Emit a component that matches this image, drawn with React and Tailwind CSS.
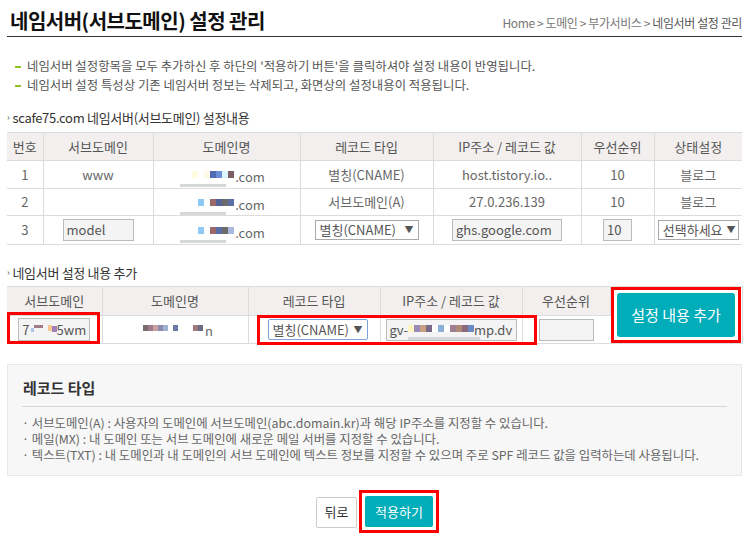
import { useState } from 'react';

const font = { fontFamily: '"Noto Sans CJK KR", "Noto Sans", sans-serif' };

const Censor = ({ colors, bar = true }) => (
    <span className="relative inline-flex items-center">
        <span className="inline-flex gap-0 mr-[1px]">
            {colors.map((c, i) => (
                <span key={i} className="inline-block w-[6px] h-[7px]" style={{ backgroundColor: c }} />
            ))}
        </span>
        {bar && <span className="absolute left-[-12px] top-[13px] w-[46px] h-[3px] bg-[#d4d8d8]" />}
    </span>
);

const DomainCell = ({ colors }) => (
    <div className="flex items-center justify-center pl-[4px]">
        <Censor colors={colors} />
        <span className="mt-[5px]">.com</span>
    </div>
);

const Select = ({ label, className = '' }) => (
    <div className={`inline-flex items-center justify-between border border-[#a9a9a9] bg-white h-[20px] px-[4px] text-[13px] text-[#555] whitespace-nowrap ${className}`}>
        <span>{label}</span>
        <span className="text-[9px] text-[#555] ml-[4px]">▼</span>
    </div>
);

const Dash = () => <span className="inline-block w-[6px] h-[2px] bg-[#8dc21f] mr-[6px] shrink-0" />;

export default function App() {
    const [sub, setSub] = useState('');

    const th = 'h-[28px] bg-[#f2efee] text-[13px] font-normal text-[#555] border-r border-[#dcdcdc] last:border-r-0';
    const td = 'text-[13px] text-[#666] text-center border-r border-[#dcdcdc] last:border-r-0';

    return (
        <div className="w-[749px] h-[536px] bg-white overflow-hidden" style={font}>
            <div className="px-[7px]">
                <div className="flex items-end justify-between h-[37px] border-b border-[#333] pb-[5px]">
                    <h1 className="text-[20px] font-bold text-[#111] leading-none pl-[3px] tracking-[-0.5px]">네임서버(서브도메인) 설정 관리</h1>
                    <div className="text-[12px] text-[#777] leading-none mb-[2px] tracking-[-0.4px]">
                        Home &gt; 도메인 &gt; 부가서비스 &gt; <span className="text-[#555]">네임서버 설정 관리</span>
                    </div>
                </div>

                <ul className="mt-[20px] text-[12.4px] text-[#555] leading-[19px]">
                    <li className="flex items-center pl-[8px]">
                        <Dash />
                        네임서버 설정항목을 모두 추가하신 후 하단의 '적용하기 버튼'을 클릭하셔야 설정 내용이 반영됩니다.
                    </li>
                    <li className="flex items-center pl-[8px]">
                        <Dash />
                        네임서버 설정 특성상 기존 네임서버 정보는 삭제되고, 화면상의 설정내용이 적용됩니다.
                    </li>
                </ul>

                <div className="mt-[16px] text-[13px] text-[#333] flex items-center leading-none tracking-[-0.3px]">
                    <span className="text-[9px] text-[#555] mr-[3px]">›</span>
                    scafe75.com 네임서버(서브도메인) 설정내용
                </div>

                <table className="mt-[8px] w-[735px] border-collapse table-fixed border-t border-[#dcdcdc]">
                    <colgroup>
                        <col className="w-[36px]" />
                        <col className="w-[110px]" />
                        <col className="w-[147px]" />
                        <col className="w-[133px]" />
                        <col className="w-[148px]" />
                        <col className="w-[73px]" />
                        <col className="w-[88px]" />
                    </colgroup>
                    <thead>
                        <tr className="border-b border-[#dcdcdc]">
                            <th className={th}>번호</th>
                            <th className={th}>서브도메인</th>
                            <th className={th}>도메인명</th>
                            <th className={th}>레코드 타입</th>
                            <th className={th}>IP주소 / 레코드 값</th>
                            <th className={th}>우선순위</th>
                            <th className={th}>상태설정</th>
                        </tr>
                    </thead>
                    <tbody>
                        <tr className="h-[28px] border-b border-[#dcdcdc]">
                            <td className={td}>1</td>
                            <td className={td}>www</td>
                            <td className={td}><DomainCell colors={['#fffbe0', '#fff', '#fdfbe8', '#4f6bb2', '#6a8fd8', '#d9f5ff', '#7a6060']} /></td>
                            <td className={td}>별칭(CNAME)</td>
                            <td className={td}>host.tistory.io..</td>
                            <td className={td}>10</td>
                            <td className={td}>블로그</td>
                        </tr>
                        <tr className="h-[27px] border-b border-[#dcdcdc]">
                            <td className={td}>2</td>
                            <td className={td}></td>
                            <td className={td}><DomainCell colors={['#fff', '#8ec8f5', '#fff', '#9a6a6a', '#56639a', '#6b6b6b', '#5b6ea6']} /></td>
                            <td className={td}>서브도메인(A)</td>
                            <td className={td}>27.0.236.139</td>
                            <td className={td}>10</td>
                            <td className={td}>블로그</td>
                        </tr>
                        <tr className="h-[29px] border-b border-[#dcdcdc]">
                            <td className={td}>3</td>
                            <td className={td}>
                                <div className="flex justify-center">
                                    <div className="w-[71px] h-[22px] border border-[#bbb] bg-[#f4f4f4] text-left px-[3px] text-[13px] text-[#555] leading-[20px]">model</div>
                                </div>
                            </td>
                            <td className={td}><DomainCell colors={['#fff', '#8ec8f5', '#fff', '#9a6a6a', '#5b6ea6', '#6b6b6b', '#a8b8e0']} /></td>
                            <td className={td}>
                                <div className="flex justify-center"><Select label="별칭(CNAME)" className="w-[104px]" /></div>
                            </td>
                            <td className={td}>
                                <div className="flex justify-center">
                                    <div className="w-[110px] h-[22px] border border-[#bbb] bg-[#f4f4f4] text-left px-[3px] text-[13px] text-[#555] leading-[20px]">ghs.google.com</div>
                                </div>
                            </td>
                            <td className={td}>
                                <div className="flex justify-center">
                                    <div className="w-[29px] h-[22px] border border-[#bbb] bg-[#f4f4f4] text-left px-[3px] text-[13px] text-[#555] leading-[20px]">10</div>
                                </div>
                            </td>
                            <td className={td}>
                                <div className="flex justify-center"><Select label="선택하세요" className="w-[81px] text-[12.5px] px-[3px]" /></div>
                            </td>
                        </tr>
                    </tbody>
                </table>

                <div className="mt-[21px] text-[13px] text-[#333] flex items-center leading-none tracking-[-0.3px]">
                    <span className="text-[9px] text-[#555] mr-[3px]">›</span>
                    네임서버 설정 내용 추가
                </div>

                <table className="mt-[7px] w-[735px] border-collapse table-fixed border-t border-[#dcdcdc] border-r">
                    <colgroup>
                        <col className="w-[95px]" />
                        <col className="w-[146px]" />
                        <col className="w-[132px]" />
                        <col className="w-[142px]" />
                        <col className="w-[88px]" />
                        <col className="w-[132px]" />
                    </colgroup>
                    <tbody>
                        <tr className="border-b border-[#dcdcdc]">
                            <th className={`${th} h-[29px]`}>서브도메인</th>
                            <th className={th}>도메인명</th>
                            <th className={th}>레코드 타입</th>
                            <th className={th}>IP주소 / 레코드 값</th>
                            <th className={th}>우선순위</th>
                            <td rowSpan={2} className="bg-white p-0 align-middle">
                                <div className="flex justify-center">
                                    <div className="border-[3px] border-[#f00] p-[3px]">
                                        <button className="w-[118px] h-[44px] rounded-[3px] bg-[#00adb9] text-white text-[15px]">설정 내용 추가</button>
                                    </div>
                                </div>
                            </td>
                        </tr>
                        <tr className="h-[28px] border-b border-[#dcdcdc]">
                            <td className={`${td} relative`}>
                                <div className="flex justify-center">
                                    <div className="relative w-[72px] h-[23px] border border-[#bbb] bg-[#f4f4f4] text-left px-[3px] text-[13px] text-[#555] leading-[21px] flex items-center">
                                        <span>7</span>
                                        <span className="inline-block w-[4px] h-[4px] bg-[#b0c4e8] ml-[2px]" />
                                        <span className="inline-block w-[12px] h-[3px] bg-[#a07a8a] mb-[6px]" />
                                        <span className="inline-block w-[8px]" />
                                        <span className="inline-block w-[6px] h-[6px] bg-[#f5c68e] mb-[3px]" />
                                        <span className="inline-block w-[6px] h-[6px] bg-[#9f7fb8] mb-[1px]" />
                                        <span>5wm</span>
                                        <span className="absolute left-[10px] top-[22px] w-[34px] h-[3px] bg-[#d4d8d8]" />
                                    </div>
                                </div>
                                <div className="absolute left-0 top-[-4px] w-[93px] h-[32px] border-[3px] border-[#f00] pointer-events-none" />
                            </td>
                            <td className={td}>
                                <div className="flex items-center justify-center pl-[6px]">
                                    <span className="inline-flex mb-[4px]">
                                        {['#7a6a6a', '#a07a8a', '#c9a0a0', '#8a8ab0', '#9fb0d0', '#fff', '#6b7aa6', '#fff', '#fff', '#fff', '#a07a7a', '#6b6b8a'].map((c, i) => (
                                            <span key={i} className="inline-block w-[5px] h-[6px]" style={{ backgroundColor: c }} />
                                        ))}
                                    </span>
                                    <span className="ml-[2px] mt-[2px]">n</span>
                                </div>
                            </td>
                            <td className={`${td} relative`}>
                                <div className="flex justify-center">
                                    <div className="inline-flex items-center justify-between border border-[#7ea3d6] bg-white h-[21px] w-[100px] px-[4px] text-[13px] text-[#555] rounded-[2px] ml-[7px]">
                                        <span>별칭(CNAME)</span>
                                        <span className="text-[9px]">▼</span>
                                    </div>
                                </div>
                                <div className="absolute left-[8px] top-[-1px] w-[280px] h-[30px] border-[3px] border-[#f00] pointer-events-none" />
                            </td>
                            <td className={td}>
                                <div className="flex justify-center">
                                    <div className="relative w-[131px] h-[22px] border border-[#bbb] bg-[#f4f4f4] text-left px-[3px] text-[13px] text-[#555] leading-[20px] overflow-hidden whitespace-nowrap flex items-center">
                                        <span>gv-</span>
                                        {['#fff3c0', '#9a8ab8', '#c8a080', '#7a6a8a', '#fff', '#8ab0d8', '#fff', '#a08090', '#b08878', '#8a6a7a', '#6a8ac8'].map((c, i) => (
                                            <span key={i} className="inline-block w-[6px] h-[7px] mb-[3px]" style={{ backgroundColor: c }} />
                                        ))}
                                        <span>mp.dv</span>
                                        <span className="absolute left-[21px] top-[17px] w-[72px] h-[4px] bg-[#d4d8d8]" />
                                    </div>
                                </div>
                            </td>
                            <td className={td}>
                                <div className="flex justify-center">
                                    <div className="w-[55px] h-[22px] border border-[#bbb] bg-[#f4f4f4]" />
                                </div>
                            </td>
                        </tr>
                    </tbody>
                </table>

                <div className="mt-[20px] w-[735px] h-[112px] bg-[#f7f7f7] border border-[#e6e6e6] px-[14px]">
                    <div className="pt-[13px] pb-[8px] border-b border-[#d6d6d6] text-[15px] font-bold text-[#333] leading-[20px] pl-[1px]">레코드 타입</div>
                    <ul className="pt-[8px] text-[12.4px] text-[#666] leading-[16px]">
                        <li>· 서브도메인(A) : 사용자의 도메인에 서브도메인(abc.domain.kr)과 해당 IP주소를 지정할 수 있습니다.</li>
                        <li>· 메일(MX) : 내 도메인 또는 서브 도메인에 새로운 메일 서버를 지정할 수 있습니다.</li>
                        <li>· 텍스트(TXT) : 내 도메인과 내 도메인의 서브 도메인에 텍스트 정보를 지정할 수 있으며 주로 SPF 레코드 값을 입력하는데 사용됩니다.</li>
                    </ul>
                </div>

                <div className="mt-[14px] flex justify-center items-center gap-[2px] pl-[6px]">
                    <button className="w-[41px] h-[31px] border border-[#ccc] bg-white rounded-[2px] text-[13px] text-[#333] mt-[1px]">뒤로</button>
                    <div className="border-[3px] border-[#f00] p-[3px] pt-[3px]">
                        <button className="w-[68px] h-[31px] bg-[#00adb9] text-white text-[13px] rounded-[2px]">적용하기</button>
                    </div>
                </div>
            </div>
        </div>
    );
}
